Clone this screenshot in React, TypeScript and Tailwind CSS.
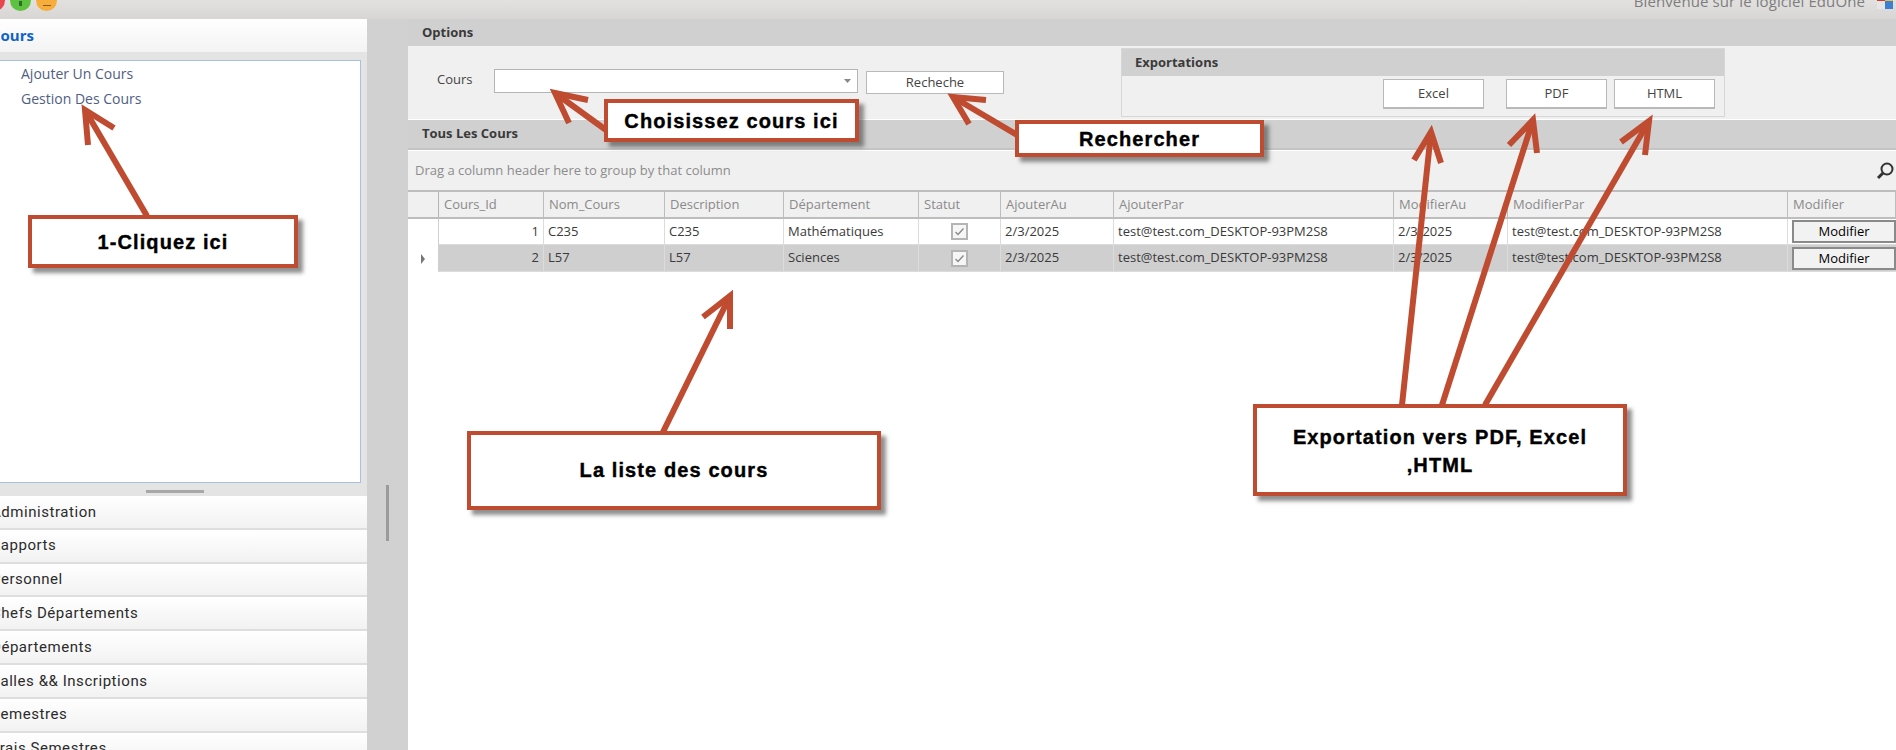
const ACCENT = "#bf4b30";

const columns = [
  { name: "Cours_Id", w: "w-[105px]" },
  { name: "Nom_Cours", w: "w-[121px]" },
  { name: "Description", w: "w-[119px]" },
  { name: "Département", w: "w-[135px]" },
  { name: "Statut", w: "w-[82px]" },
  { name: "AjouterAu", w: "w-[113px]" },
  { name: "AjouterPar", w: "w-[280px]" },
  { name: "ModifierAu", w: "w-[114px]" },
  { name: "ModifierPar", w: "w-[280px]" },
  { name: "Modifier", w: "w-[108px]" },
];

const rows = [
  { id: "1", nom: "C235", desc: "C235", dep: "Mathématiques", selected: false, h: "h-[26px]" },
  { id: "2", nom: "L57", desc: "L57", dep: "Sciences", selected: true, h: "h-[27px]" },
];

const navItems = [
  "Administration",
  "Rapports",
  "Personnel",
  "Chefs Départements",
  "Départements",
  "Salles && Inscriptions",
  "Semestres",
  "Frais Semestres",
];

function Check() {
  return (
    <span className="flex h-[17px] w-[17px] items-center justify-center border-[2px] border-[#b4b4b4] bg-[#f6f6f6]">
      <svg width="11" height="11" viewBox="0 0 11 11" fill="none">
        <path d="M1.5 6l2.5 2.5L9.5 2.5" stroke="#8a8a8a" strokeWidth="1.4" />
      </svg>
    </span>
  );
}

function Callout({ className, children }: { className: string; children: React.ReactNode }) {
  return (
    <div
      className={`absolute z-20 flex items-center justify-center border-[4px] border-[#bf4b30] bg-white text-center font-['Liberation_Sans',Arial,sans-serif] text-[20px] leading-[28px] font-bold tracking-[1.1px] text-black shadow-[5px_5px_4px_rgba(70,70,70,0.6)] [-webkit-text-stroke:0.4px_black] ${className}`}
    >
      {children}
    </div>
  );
}

function Arrow({ from, tip, b1, b2 }: { from: number[]; tip: number[]; b1: number[]; b2: number[] }) {
  return (
    <g stroke={ACCENT} fill="none" strokeWidth="6">
      <line x1={from[0]} y1={from[1]} x2={tip[0]} y2={tip[1]} />
      <polyline points={`${b1[0]},${b1[1]} ${tip[0]},${tip[1]} ${b2[0]},${b2[1]}`} strokeMiterlimit="10" />
    </g>
  );
}

function GridRow({ r }: { r: (typeof rows)[number] }) {
  const cell = "flex h-full items-center border-r border-b border-[#dcdcdc] px-[4px] shrink-0 truncate";
  const email = "test@test.com_DESKTOP-93PM2S8";
  const date = "2/3/2025";
  return (
    <div className={`flex ${r.h} text-[#3a3a3a]`}>
      <div className="flex h-full w-[31px] shrink-0 items-center justify-center border-r border-[#d0d0d0] bg-white">
        {r.selected && (
          <svg width="6" height="10" viewBox="0 0 6 10">
            <path d="M1 0l4 5-4 5z" fill="#777" />
          </svg>
        )}
      </div>
      <div className={`flex min-w-0 flex-1 ${r.selected ? "bg-[#cfcfcf]" : "bg-white"}`}>
        <div className={`${cell} ${columns[0].w} justify-end`}>{r.id}</div>
        <div className={`${cell} ${columns[1].w}`}>{r.nom}</div>
        <div className={`${cell} ${columns[2].w}`}>{r.desc}</div>
        <div className={`${cell} ${columns[3].w}`}>{r.dep}</div>
        <div className={`${cell} ${columns[4].w} justify-center`}>
          <Check />
        </div>
        <div className={`${cell} ${columns[5].w}`}>{date}</div>
        <div className={`${cell} ${columns[6].w}`}>{email}</div>
        <div className={`${cell} ${columns[7].w}`}>{date}</div>
        <div className={`${cell} ${columns[8].w}`}>{email}</div>
        <div className="flex h-full flex-1 items-center border-b border-[#dcdcdc] pl-[4px]">
          <button className="mr-[-2px] h-[23px] w-full border-[2px] border-[#8a8a8a] bg-[#f2f2f2] text-center text-black">Modifier</button>
        </div>
      </div>
    </div>
  );
}

export default function App() {
  return (
    <div className="relative h-[750px] w-[1896px] overflow-hidden bg-white font-['Open_Sans','Noto_Sans',sans-serif] text-[13px] text-[#333]">
      {/* title bar */}
      <header className="relative flex h-[19px] items-end justify-end bg-gradient-to-b from-[#e3e1e0] to-[#d8d6d5] pr-[3px]">
        <div className="absolute top-[-10px] left-[-16px] flex gap-[5px]">
          <span className="h-[21px] w-[21px] rounded-full bg-[#e8474f]" />
          <span className="flex h-[21px] w-[21px] items-end justify-center rounded-full bg-[#5cc23f]">
            <span className="mb-[5px] h-[5px] w-[3px] bg-[#2f6b2c]" />
          </span>
          <span className="flex h-[21px] w-[21px] items-end justify-center rounded-full bg-[#f7ad3b]">
            <span className="mb-[5px] h-[1px] w-[8px] bg-[#8a5a15]" />
          </span>
        </div>
        <div className="mb-[10px] flex items-end gap-[12px] leading-[16px] text-[#7d7d7d]">
          <span className="text-[15px] tracking-[0.1px]">Bienvenue sur le logiciel EduOne</span>
          <span className="flex h-[16px] w-[16px] flex-wrap">
            <span className="h-[8px] w-[8px] bg-[#d83a30]" />
            <span className="h-[8px] w-[8px] bg-[#e8c040]" />
            <span className="h-[8px] w-[8px] bg-[#e6e6e6]" />
            <span className="h-[8px] w-[8px] bg-[#3f7fd0]" />
          </span>
        </div>
      </header>

      <div className="flex h-[731px]">
        {/* left panel */}
        <aside className="flex w-[367px] shrink-0 flex-col bg-[#e4e4e4]">
          <div className="flex h-[33px] items-center overflow-hidden bg-gradient-to-b from-white to-[#f3f3f3]">
            <span className="ml-[-9px] text-[15px] font-bold text-[#0f62c9]">Cours</span>
          </div>
          <div className="mt-[8px] mr-[6px] h-[423px] border border-l-0 border-[#a9c1dd] bg-white pl-[21px] text-[14px] leading-[25px] text-[#4f6083]">
            <div>Ajouter Un Cours</div>
            <div>Gestion Des Cours</div>
          </div>
          <div className="flex h-[13px] justify-center pt-[7px]">
            <span className="ml-[-18px] h-[3px] w-[58px] bg-[#a8a8a8]" />
          </div>
          <nav className="flex flex-1 flex-col overflow-hidden font-['Roboto',sans-serif] text-[15px] tracking-[0.55px] text-[#2b2b2b]">
            {navItems.map((item) => (
              <div
                key={item}
                className="flex h-[33.8px] shrink-0 items-center border-b-[2px] border-[#dedede] bg-gradient-to-b from-white to-[#f2f2f2]"
              >
                <span className="ml-[-9px]">{item}</span>
              </div>
            ))}
          </nav>
        </aside>

        {/* splitter */}
        <div className="w-[41px] shrink-0 bg-[#d1d1d1] pt-[466px] pl-[19px]">
          <div className="h-[56px] w-[3px] bg-[#9b9b9b]" />
        </div>

        {/* main */}
        <main className="flex min-w-0 flex-1 flex-col">
          <div className="flex h-[27px] items-center bg-[#d0d0d0] pl-[14px] font-bold text-[#3a3a3a]">Options</div>
          <section className="flex h-[73px] bg-[#f0f0f0]">
            <div className="flex items-start pt-[23px] pl-[29px]">
              <label className="mt-[1px] w-[57px] text-[#444]">Cours</label>
              <div className="flex h-[24px] w-[364px] items-center justify-end border border-[#b5b5b5] bg-white pr-[6px]">
                <svg width="7" height="4" viewBox="0 0 7 4">
                  <path d="M0 0h7L3.5 4z" fill="#888" />
                </svg>
              </div>
              <button className="mt-[2px] ml-[8px] h-[23px] w-[138px] border border-[#b9b9b9] bg-white text-center text-[#444]">
                Recheche
              </button>
            </div>
            <div className="mt-[2px] ml-[117px] flex h-[69px] w-[604px] flex-col border border-[#d6d6d6]">
              <div className="flex h-[27px] shrink-0 items-center bg-[#d0d0d0] pl-[13px] font-bold text-[#3a3a3a]">Exportations</div>
              <div className="flex pt-[3px] text-[#444]">
                <button className="ml-[261px] h-[30px] w-[101px] border border-b-[2px] border-[#b9b9b9] bg-white">Excel</button>
                <button className="ml-[22px] h-[30px] w-[101px] border border-b-[2px] border-[#b9b9b9] bg-white">PDF</button>
                <button className="ml-[7px] h-[30px] w-[101px] border border-b-[2px] border-[#b9b9b9] bg-white">HTML</button>
              </div>
            </div>
          </section>
          <div className="mt-[1px] flex h-[30px] items-center border-b-[2px] border-[#c4c4c4] bg-[#d0d0d0] pl-[14px] font-bold text-[#3a3a3a]">
            Tous Les Cours
          </div>
          <div className="flex h-[40px] items-center justify-between border-t border-white bg-[#f0f0f0] pl-[7px] text-[#8c8c8c]">
            <span>Drag a column header here to group by that column</span>
            <svg width="20" height="20" viewBox="0 0 20 20" fill="none" stroke="#333" strokeWidth="2" className="mr-[1px]">
              <circle cx="12" cy="8" r="5.5" />
              <path d="M8 12l-5 5" strokeWidth="3" />
            </svg>
          </div>
          <div className="flex h-[29px] border-y-[2px] border-[#bdbdbd] bg-[#f0f0f0] text-[#8a8a8a]">
            <div className="w-[31px] shrink-0 border-r border-[#b5b5b5]" />
            {columns.map((c) => (
              <div key={c.name} className={`flex items-center border-r border-[#bdbdbd] pl-[5px] ${c.w} shrink-0`}>
                {c.name}
              </div>
            ))}
          </div>
          {rows.map((r) => (
            <GridRow key={r.id} r={r} />
          ))}
        </main>
      </div>

      {/* annotations */}
      <svg className="pointer-events-none absolute inset-0 z-10" width="1896" height="750">
        <Arrow from={[147, 216]} tip={[85, 110]} b1={[88, 145]} b2={[114, 128]} />
        <Arrow from={[606, 130]} tip={[555, 93]} b1={[569, 123]} b2={[588, 100]} />
        <Arrow from={[1017, 135]} tip={[953, 97]} b1={[969, 124]} b2={[986, 100]} />
        <Arrow from={[663, 432]} tip={[730, 296]} b1={[703, 317]} b2={[730, 329]} />
        <Arrow from={[1402, 405]} tip={[1431, 132]} b1={[1414, 160]} b2={[1441, 163]} />
        <Arrow from={[1442, 405]} tip={[1533, 120]} b1={[1509, 145]} b2={[1537, 153]} />
        <Arrow from={[1485, 405]} tip={[1649, 121]} b1={[1621, 142]} b2={[1645, 155]} />
      </svg>
      <Callout className="top-[215px] left-[28px] h-[53px] w-[270px]">1-Cliquez ici</Callout>
      <Callout className="top-[99px] left-[604px] h-[43px] w-[255px]">Choisissez cours ici</Callout>
      <Callout className="top-[120px] left-[1015px] h-[37px] w-[249px]">Rechercher</Callout>
      <Callout className="top-[431px] left-[467px] h-[79px] w-[414px] pb-[2px]">La liste des cours</Callout>
      <Callout className="top-[404px] left-[1253px] h-[92px] w-[374px] px-[20px] pt-[2px]">Exportation vers PDF, Excel ,HTML</Callout>
    </div>
  );
}
